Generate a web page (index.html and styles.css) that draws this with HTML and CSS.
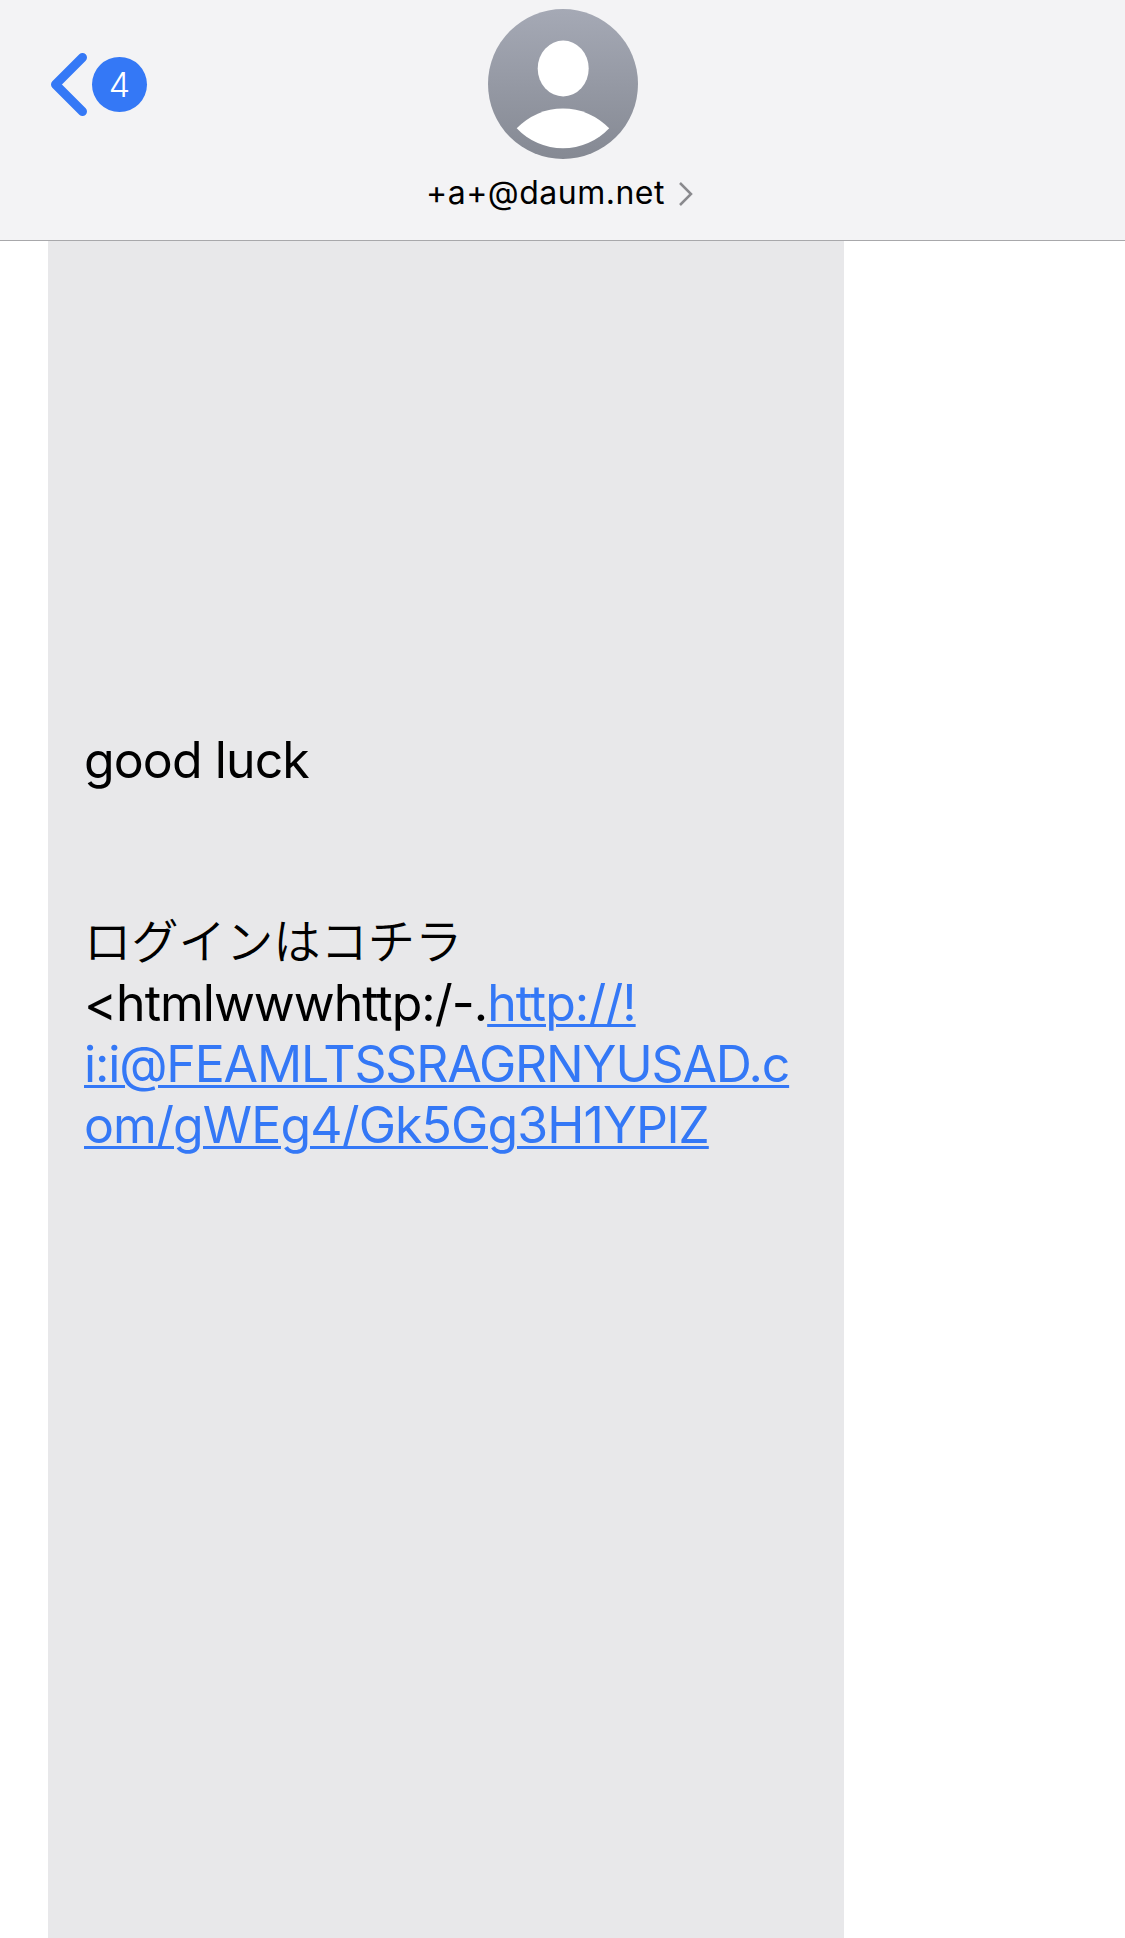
FILE: index.html
```html
<!DOCTYPE html>
<html lang="ja">
<head>
<meta charset="utf-8">
<title>Messages</title>
<link rel="stylesheet" href="styles.css">
</head>
<body>
<header class="bar">
  <a class="back">
    <svg class="back-arrow" width="38" height="63" viewBox="0 0 38 63"><path d="M33.500 4.500 6.500 31.500 33.500 58.500" fill="none" stroke="#3478f6" stroke-width="9" stroke-linecap="round" stroke-linejoin="round"/></svg>
    <span class="badge">4</span>
  </a>
  <div class="contact">
    <svg class="avatar" width="150" height="150" viewBox="0 0 150 150">
      <defs><linearGradient id="g" x1="0" y1="0" x2="0" y2="1"><stop offset="0" stop-color="#a5a9b5"/><stop offset="1" stop-color="#858993"/></linearGradient></defs>
      <circle cx="75" cy="75" r="75" fill="url(#g)"/>
      <ellipse cx="75.200" cy="59.500" rx="25.500" ry="27.900" fill="#fff"/>
      <path d="M28.700 119.300A64 64 0 0 1 121.200 119.300A63.500 63.500 0 0 1 28.700 119.300Z" fill="#fff"/>
    </svg>
    <div class="name"><span class="address">+a+@daum.net</span>
      <svg width="16" height="26" viewBox="0 0 16 26"><path d="M2 2 13 13 2 24" fill="none" stroke="#8a8a8e" stroke-width="2.500"/></svg>
    </div>
  </div>
  <span></span>
</header>
<main class="thread">
  <div class="bubble">
    <p class="greeting"><span class="line">good luck</span></p>
    <p class="message"><span class="line japanese">ログインはコチラ</span><span class="line prefix">&lt;htmlwwwhttp:/-.<a>http://!</a></span><span class="line host"><a>i:i@FEAMLTSSRAGRNYUSAD.c</a></span><span class="line"><a>om/gWEg4/Gk5Gg3H1YPlZ</a></span></p>
  </div>
</main>
</body>
</html>
```
FILE: styles.css
```css
* { box-sizing: border-box; }
body { margin: 0; height: 1938px; display: flex; flex-direction: column; overflow: hidden; background: #fff; color: #000; font-family: Inter, "Noto Sans CJK JP", sans-serif; }
.bar { height: 241px; flex: none; display: grid; grid-template-columns: 1fr auto 1fr; background: #f3f3f5; border-bottom: 1px solid #a8a8ab; }
.back { display: flex; align-items: center; gap: 5px; height: 63px; margin: 53px 0 0 49px; }
.badge { width: 55px; height: 55px; border-radius: 50%; background: #3478f6; color: #fff; font-size: 34px; font-weight: 350; line-height: 55px; text-align: center; }
.contact { display: flex; flex-direction: column; align-items: center; padding-top: 9px; }
.avatar { margin-left: 1px; }
.name { display: flex; align-items: center; gap: 13px; height: 44px; margin: 13px 5px 0 0; }
.address { padding-bottom: 3px; font-size: 32px; letter-spacing: 0.5px; white-space: nowrap; }
.thread { flex: 1; padding-left: 48px; }
.bubble { width: 796px; height: 100%; padding: 489px 36px 0; background: #e8e8ea; font-size: 50px; line-height: 61px; letter-spacing: -0.9px; }
p { margin: 0; }
.message { margin-top: 121px; }
.line { display: block; width: max-content; height: 61px; white-space: nowrap; }
.japanese { font-family: "Noto Sans CJK JP", sans-serif; font-size: 47.3px; font-weight: 350; line-height: 53px; letter-spacing: 0; }
.prefix { letter-spacing: -1px; }
.host { letter-spacing: -1.15px; }
.line a { color: #3478f6; text-decoration: underline; text-decoration-thickness: 3px; text-underline-offset: 3px; text-decoration-skip-ink: auto; }
```
